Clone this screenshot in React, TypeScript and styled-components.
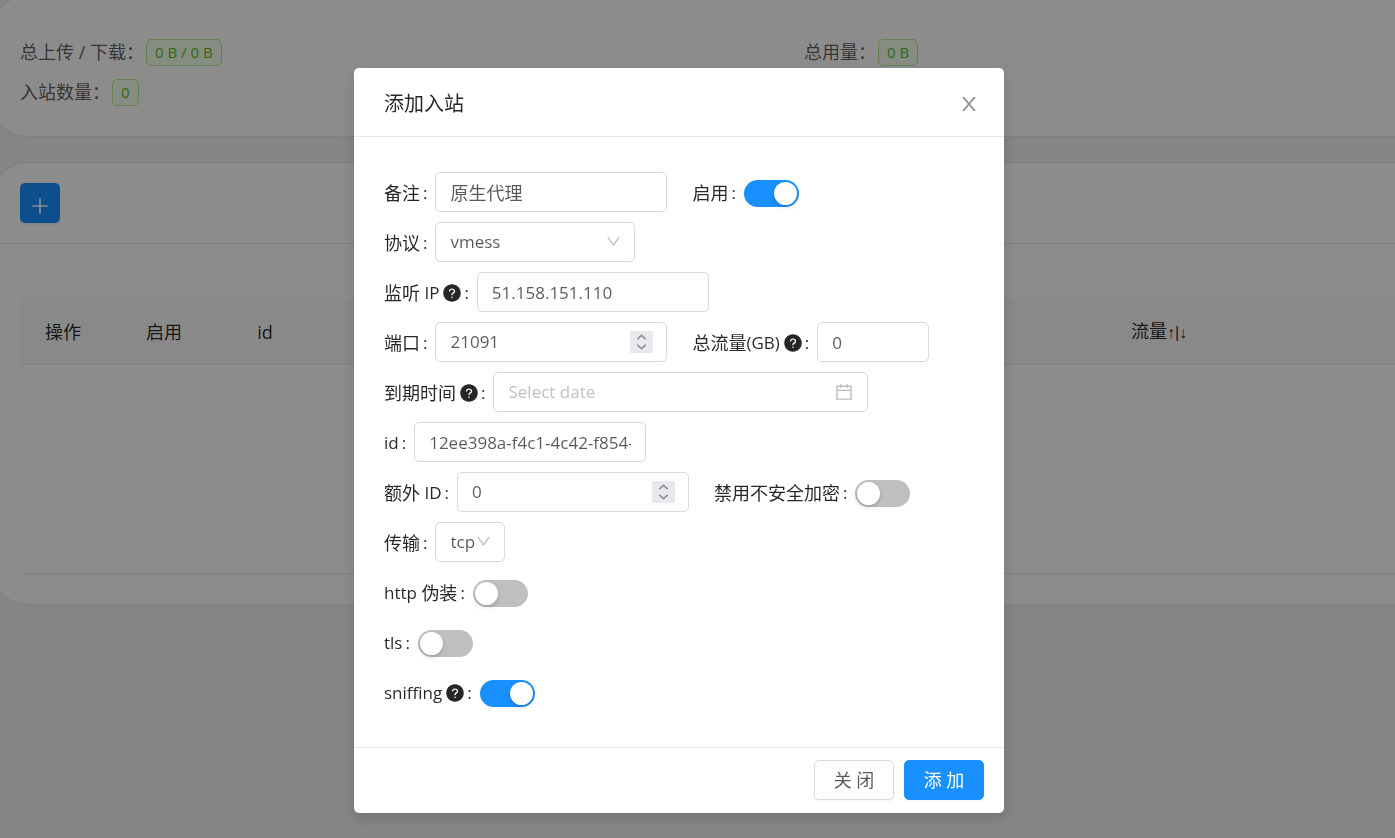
import React from "react";
import styled, { createGlobalStyle, css } from "styled-components";
import {
  AiFillQuestionCircle,
  AiOutlineCalendar,
  AiOutlineDown,
  AiOutlinePlus,
} from "react-icons/ai";

const GlobalStyle = createGlobalStyle`
  *, *::before, *::after { box-sizing: border-box; }
  body {
    margin: 0;
    background: #f0f2f5;
    color: rgba(0, 0, 0, 0.85);
    font-family: "Open Sans", "Noto Sans CJK SC", sans-serif;
    font-size: 17px;
    line-height: 28px;
    overflow: hidden;
  }
  button, input, select { font: inherit; color: inherit; }
`;

/* ---------- page behind the dialog ---------- */

const Page = styled.main`
  margin: -5px 0 0 -10px;
  min-height: 100vh;
  display: flex;
  flex-direction: column;
  gap: 25px;
`;

const Card = styled.section`
  background: #fff;
  border: 1px solid #e8e8e8;
  border-right: 0;
  border-radius: 38px 0 0 38px;
`;

const Stats = styled.dl`
  margin: 0;
  padding: 36px 0 24px 29px;
  display: grid;
  grid-template-columns: 784px 1fr;
  grid-auto-rows: 40px;
  font-size: 18px;
`;

const Stat = styled.div`
  display: flex;
  align-items: center;
  gap: 2px;
  color: rgba(0, 0, 0, 0.65);
  dt, dd { margin: 0; }
`;

const Tag = styled.dd`
  padding: 0 8px;
  border: 1px solid #b7eb8f;
  border-radius: 5px;
  background: #f6ffed;
  color: #52c41a;
  font-size: 15px;
  line-height: 25px;
`;

const CardHead = styled.header`
  padding: 20px 29px;
  border-bottom: 1px solid #e8e8e8;
`;

const AddButton = styled.button`
  display: flex;
  align-items: center;
  justify-content: center;
  width: 40px;
  height: 40px;
  padding: 5px 0 0;
  border: 0;
  border-radius: 5px;
  background: #1890ff;
  color: #fff;
  box-shadow: 0 2px 0 rgba(0, 0, 0, 0.05);
`;

const CardBody = styled.div`
  padding: 54px 0 30px 29px;
`;

const InboundTable = styled.table`
  width: 100%;
  table-layout: fixed;
  border-collapse: separate;
  border-spacing: 0;
  border-bottom: 1px solid #e8e8e8;
  border-radius: 5px 0 0 5px;

  th {
    height: 67px;
    padding: 2px 0 0;
    background: #fafafa;
    border-bottom: 1px solid #e8e8e8;
    font-size: 18px;
    font-weight: 400;
    text-align: center;
  }
  td { height: 208px; padding: 0; }
`;

const Arrows = styled.span`
  font-family: "Liberation Sans", sans-serif;
  font-size: 16px;
`;

/* ---------- dialog ---------- */

const Mask = styled.div`
  position: fixed;
  inset: 0;
  padding: 68px 37px 25px 0;
  background: rgba(0, 0, 0, 0.45);
  overflow: hidden;
`;

const Dialog = styled.div`
  width: 650px;
  max-width: 100%;
  margin: 0 auto;
  background: #fff;
  border-radius: 5px;
  box-shadow: 0 5px 15px rgba(0, 0, 0, 0.15);
`;

const DialogHead = styled.header`
  display: flex;
  align-items: center;
  justify-content: space-between;
  padding: 22px 24px 18px 30px;
  border-bottom: 1px solid #e8e8e8;

  h2 { margin: 0; font-size: 20px; font-weight: 400; line-height: 28px; }
`;

const CloseButton = styled.button`
  display: flex;
  padding: 0;
  border: 0;
  background: none;
  color: rgba(0, 0, 0, 0.45);
`;

const Form = styled.form`
  padding: 30px;
`;

const Row = styled.div`
  display: flex;
  align-items: center;
  gap: 25px;
  height: 50px;
`;

const Field = styled.div`
  display: flex;
  align-items: center;
  gap: 8px;
`;

const Label = styled.label`
  display: flex;
  align-items: center;
  padding-top: 2px;
  white-space: pre;

  svg { margin: 0 -1px 0 3px; }
  &::after { content: ":"; margin-left: 3px; }
`;

const Han = styled.span`
  font-size: 18px;
`;

const box = css`
  height: 40px;
  border: 1px solid #d9d9d9;
  border-radius: 5px;
  background: #fff;
  color: rgba(0, 0, 0, 0.65);
`;

const TextInput = styled.input<{ $width: number; $han?: boolean }>`
  ${box}
  width: ${(p) => p.$width}px;
  padding: 0 14px;
  outline: 0;
  ${(p) => p.$han && "font-size: 18px;"}
`;

const InputBox = styled.div<{ $width: number }>`
  ${box}
  width: ${(p) => p.$width}px;
  display: flex;
  align-items: center;
  padding: 0 13px 0 14px;

  input {
    flex: 1;
    min-width: 0;
    padding: 0;
    border: 0;
    outline: 0;
    background: none;
    appearance: textfield;
  }
  input::placeholder { color: #bfbfbf; }
  > svg { color: #bfbfbf; }
`;

const Stepper = styled.button`
  width: 23px;
  height: 22px;
  padding: 0;
  border: 0;
  background: #e9e9ed;
  color: #8f8f9d;
  display: flex;
`;

const SelectBox = styled.div<{ $width: number }>`
  ${box}
  width: ${(p) => p.$width}px;
  position: relative;

  select {
    width: 100%;
    height: 100%;
    padding: 0 14px;
    border: 0;
    outline: 0;
    background: none;
    appearance: none;
  }
  svg {
    position: absolute;
    right: 12px;
    top: 10px;
    color: #bfbfbf;
    pointer-events: none;
  }
`;

const Switch = styled.input`
  appearance: none;
  width: 55px;
  height: 27px;
  margin: 3px 0 0;
  padding: 2px;
  border-radius: 14px;
  background: #bfbfbf;

  &::before {
    content: "";
    display: block;
    width: 23px;
    height: 23px;
    border-radius: 50%;
    background: #fff;
    box-shadow: 0 2px 4px rgba(0, 35, 11, 0.2);
  }
  &:checked { background: #1890ff; }
  &:checked::before { margin-left: auto; }
`;

const DialogFoot = styled.footer`
  display: flex;
  justify-content: flex-end;
  gap: 10px;
  padding: 12px 20px 13px;
  border-top: 1px solid #e8e8e8;
`;

const Button = styled.button<{ $primary?: boolean }>`
  width: 80px;
  height: 40px;
  padding: 0;
  border: 1px solid ${(p) => (p.$primary ? "#1890ff" : "#d9d9d9")};
  border-radius: 5px;
  background: ${(p) => (p.$primary ? "#1890ff" : "#fff")};
  color: ${(p) => (p.$primary ? "#fff" : "rgba(0, 0, 0, 0.65)")};
  font-size: 18px;
  box-shadow: 0 2px 0 rgba(0, 0, 0, 0.03);
`;

const CloseIcon = () => (
  <svg width="22" height="22" viewBox="0 0 1024 1024" fill="currentColor" aria-hidden="true">
    <path d="M563.8 512l262.5-312.9c4.4-5.2.7-13.1-6.1-13.1h-79.8c-4.7 0-9.2 2.1-12.3 5.7L511.6 449.8 295.1 191.7c-3-3.6-7.5-5.7-12.3-5.7H203c-6.8 0-10.5 7.9-6.1 13.1L459.4 512 196.9 824.9A7.95 7.95 0 0 0 203 838h79.8c4.7 0 9.2-2.1 12.3-5.7l216.5-258.1 216.5 258.1c3 3.6 7.5 5.7 12.3 5.7h79.8c6.8 0 10.5-7.9 6.1-13.1L563.8 512z" />
  </svg>
);

type FieldProps = { id: string; label: React.ReactNode; help?: boolean; children: React.ReactNode };

const FormField = ({ id, label, help, children }: FieldProps) => (
  <Field>
    <Label htmlFor={id}>
      {label}
      {help && <AiFillQuestionCircle size={20} />}
    </Label>
    {children}
  </Field>
);

const NumberInput = ({ id, value }: { id: string; value: number }) => (
  <InputBox $width={232}>
    <input id={id} type="number" defaultValue={value} />
    <Stepper type="button" tabIndex={-1} aria-label="step">
      <svg width="23" height="22" viewBox="0 0 23 22" fill="none" stroke="currentColor" strokeWidth="1.7">
        <path d="M7.3 8.2l4.2-3.9 4.2 3.9M7.3 13.8l4.2 3.9 4.2-3.9" />
      </svg>
    </Stepper>
  </InputBox>
);

const SelectInput = ({ id, value, width }: { id: string; value: string; width: number }) => (
  <SelectBox $width={width}>
    <select id={id} defaultValue={value}>
      <option value={value}>{value}</option>
    </select>
    <AiOutlineDown size={17} />
  </SelectBox>
);

export default function App() {
  return (
    <>
      <GlobalStyle />
      <Page>
        <Card>
          <Stats>
            <Stat><dt>总上传 / 下载：</dt><Tag>0 B / 0 B</Tag></Stat>
            <Stat><dt>总用量：</dt><Tag>0 B</Tag></Stat>
            <Stat><dt>入站数量：</dt><Tag>0</Tag></Stat>
          </Stats>
        </Card>
        <Card>
          <CardHead>
            <AddButton type="button" aria-label="添加"><AiOutlinePlus size={22} /></AddButton>
          </CardHead>
          <CardBody>
            <InboundTable>
              <colgroup>
                <col width="86" />
                <col width="116" />
                <col width="86" />
                <col width="751" />
                <col width="200" />
                <col />
              </colgroup>
              <thead>
                <tr>
                  <th>操作</th>
                  <th>启用</th>
                  <th>id</th>
                  <th />
                  <th>流量<Arrows>↑|↓</Arrows></th>
                  <th />
                </tr>
              </thead>
              <tbody><tr><td colSpan={6} /></tr></tbody>
            </InboundTable>
          </CardBody>
        </Card>
      </Page>

      <Mask>
        <Dialog role="dialog" aria-modal="true" aria-labelledby="dialog-title">
          <DialogHead>
            <h2 id="dialog-title">添加入站</h2>
            <CloseButton type="button" aria-label="关闭"><CloseIcon /></CloseButton>
          </DialogHead>
          <Form>
            <Row>
              <FormField id="remark" label={<Han>备注</Han>}>
                <TextInput id="remark" $width={232} $han defaultValue="原生代理" />
              </FormField>
              <FormField id="enable" label={<Han>启用</Han>}>
                <Switch id="enable" type="checkbox" defaultChecked />
              </FormField>
            </Row>
            <Row>
              <FormField id="protocol" label={<Han>协议</Han>}>
                <SelectInput id="protocol" value="vmess" width={200} />
              </FormField>
            </Row>
            <Row>
              <FormField id="listen" label={<><Han>监听</Han>{" IP"}</>} help>
                <TextInput id="listen" $width={232} defaultValue="51.158.151.110" />
              </FormField>
            </Row>
            <Row>
              <FormField id="port" label={<Han>端口</Han>}>
                <NumberInput id="port" value={21091} />
              </FormField>
              <FormField id="total" label={<><Han>总流量</Han>(GB)</>} help>
                <TextInput id="total" $width={112} defaultValue="0" />
              </FormField>
            </Row>
            <Row>
              <FormField id="expiry" label={<Han>到期时间</Han>} help>
                <InputBox $width={375}>
                  <input id="expiry" type="text" placeholder="Select date" />
                  <AiOutlineCalendar size={20} />
                </InputBox>
              </FormField>
            </Row>
            <Row>
              <FormField id="uuid" label="id">
                <TextInput id="uuid" $width={232} defaultValue="12ee398a-f4c1-4c42-f854-" />
              </FormField>
            </Row>
            <Row>
              <FormField id="alter" label={<><Han>额外</Han>{" ID"}</>}>
                <NumberInput id="alter" value={0} />
              </FormField>
              <FormField id="insecure" label={<Han>禁用不安全加密</Han>}>
                <Switch id="insecure" type="checkbox" />
              </FormField>
            </Row>
            <Row>
              <FormField id="network" label={<Han>传输</Han>}>
                <SelectInput id="network" value="tcp" width={70} />
              </FormField>
            </Row>
            <Row>
              <FormField id="http" label={<>{"http "}<Han>伪装</Han></>}>
                <Switch id="http" type="checkbox" />
              </FormField>
            </Row>
            <Row>
              <FormField id="tls" label="tls">
                <Switch id="tls" type="checkbox" />
              </FormField>
            </Row>
            <Row>
              <FormField id="sniffing" label="sniffing" help>
                <Switch id="sniffing" type="checkbox" defaultChecked />
              </FormField>
            </Row>
          </Form>
          <DialogFoot>
            <Button type="button">关 闭</Button>
            <Button type="button" $primary>添 加</Button>
          </DialogFoot>
        </Dialog>
      </Mask>
    </>
  );
}
